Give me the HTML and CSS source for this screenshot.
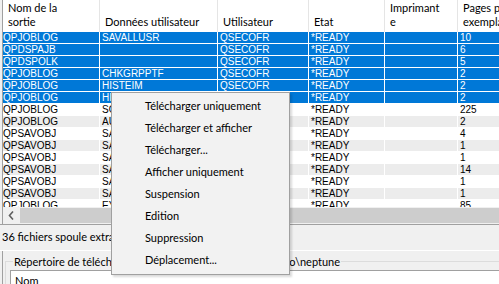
FILE: index.html
```html
<!DOCTYPE html>
<html lang="fr">
<head>
    <meta charset="UTF-8">
    <title>Fichiers spoule</title>
    <link rel="stylesheet" href="styles.css">
</head>
<body>
    <div class="grid">
        <div class="head">
            <div class="hcell c1">Nom de la<br>sortie</div>
            <div class="hcell c2">Données utilisateur</div>
            <div class="hcell c3">Utilisateur</div>
            <div class="hcell c4">Etat</div>
            <div class="hcell c5">Imprimant<br>e</div>
            <div class="hcell c6">Pages par<br>exemplaire</div>
        </div>
        <div class="row sel"><div class="cell c1">QPJOBLOG</div><div class="cell c2">SAVALLUSR</div><div class="cell c3">QSECOFR</div><div class="cell c4">*READY</div><div class="cell c5"></div><div class="cell c6">10</div></div>
        <div class="row sel"><div class="cell c1">QPDSPAJB</div><div class="cell c2"></div><div class="cell c3">QSECOFR</div><div class="cell c4">*READY</div><div class="cell c5"></div><div class="cell c6">6</div></div>
        <div class="row sel"><div class="cell c1">QPDSPOLK</div><div class="cell c2"></div><div class="cell c3">QSECOFR</div><div class="cell c4">*READY</div><div class="cell c5"></div><div class="cell c6">5</div></div>
        <div class="row sel"><div class="cell c1">QPJOBLOG</div><div class="cell c2">CHKGRPPTF</div><div class="cell c3">QSECOFR</div><div class="cell c4">*READY</div><div class="cell c5"></div><div class="cell c6">2</div></div>
        <div class="row sel"><div class="cell c1">QPJOBLOG</div><div class="cell c2">HISTEIM</div><div class="cell c3">QSECOFR</div><div class="cell c4">*READY</div><div class="cell c5"></div><div class="cell c6">2</div></div>
        <div class="row sel"><div class="cell c1">QPJOBLOG</div><div class="cell c2">HISTMNT</div><div class="cell c3">QSECOFR</div><div class="cell c4">*READY</div><div class="cell c5"></div><div class="cell c6">2</div></div>
        <div class="row"><div class="cell c1">QPJOBLOG</div><div class="cell c2">SOCKETS</div><div class="cell c3">QSECOFR</div><div class="cell c4">*READY</div><div class="cell c5"></div><div class="cell c6">225</div></div>
        <div class="row alt"><div class="cell c1">QPJOBLOG</div><div class="cell c2">AUTOSTART</div><div class="cell c3">QSECOFR</div><div class="cell c4">*READY</div><div class="cell c5"></div><div class="cell c6">2</div></div>
        <div class="row"><div class="cell c1">QPSAVOBJ</div><div class="cell c2">SAVLIB</div><div class="cell c3">QSECOFR</div><div class="cell c4">*READY</div><div class="cell c5"></div><div class="cell c6">4</div></div>
        <div class="row alt"><div class="cell c1">QPSAVOBJ</div><div class="cell c2">SAVLIB</div><div class="cell c3">QSECOFR</div><div class="cell c4">*READY</div><div class="cell c5"></div><div class="cell c6">1</div></div>
        <div class="row"><div class="cell c1">QPSAVOBJ</div><div class="cell c2">SAVLIB</div><div class="cell c3">QSECOFR</div><div class="cell c4">*READY</div><div class="cell c5"></div><div class="cell c6">1</div></div>
        <div class="row alt"><div class="cell c1">QPSAVOBJ</div><div class="cell c2">SAVLIB</div><div class="cell c3">QSECOFR</div><div class="cell c4">*READY</div><div class="cell c5"></div><div class="cell c6">14</div></div>
        <div class="row"><div class="cell c1">QPSAVOBJ</div><div class="cell c2">SAVLIB</div><div class="cell c3">QSECOFR</div><div class="cell c4">*READY</div><div class="cell c5"></div><div class="cell c6">1</div></div>
        <div class="row alt"><div class="cell c1">QPSAVOBJ</div><div class="cell c2">SAVLIB</div><div class="cell c3">QSECOFR</div><div class="cell c4">*READY</div><div class="cell c5"></div><div class="cell c6">1</div></div>
        <div class="row last"><div class="cell c1">QPJOBLOG</div><div class="cell c2">EYSAV</div><div class="cell c3">QSECOFR</div><div class="cell c4">*READY</div><div class="cell c5"></div><div class="cell c6">85</div></div>
        <div class="hscroll">
            <div class="arrow">
                <svg width="7" height="9" viewBox="0 0 7 9"><path d="M5 0.5 L1.5 4.5 L5 8.5" fill="none" stroke="#606060" stroke-width="1.6"/></svg>
            </div>
            <div class="thumb"></div>
        </div>
    </div>

    <div class="status">36 fichiers spoule extraits</div>

    <div class="panel">
        <fieldset class="dest">
            <legend>Répertoire de téléchargement : C:\Users\admin\AppDemo\neptune</legend>
            <div class="list">
                <div class="list-head">Nom</div>
            </div>
        </fieldset>
    </div>

    <div class="menu">
        <div class="item">Télécharger uniquement</div>
        <div class="item">Télécharger et afficher</div>
        <div class="item">Télécharger...</div>
        <div class="item">Afficher uniquement</div>
        <div class="item">Suspension</div>
        <div class="item">Edition</div>
        <div class="item">Suppression</div>
        <div class="item">Déplacement...</div>
    </div>
</body>
</html>
```

FILE: styles.css
```css
body {
    margin: 0;
    width: 499px;
    height: 284px;
    overflow: hidden;
    background-color: #f0f0f0;
    font-family: 'Lato', 'Noto Sans', sans-serif;
    font-size: 11px;
    position: relative;
}
.grid {
    margin-left: 2px;
    border-left: 1px solid #a0a0a0;
    background-color: white;
    width: 520px;
}
.head {
    display: flex;
    height: 32px;
    background-color: white;
}
.hcell {
    box-sizing: border-box;
    flex-shrink: 0;
    height: 32px;
    padding: 0 0 3px 5px;
    border-right: 1px solid #e5e5e5;
    line-height: 14px;
    display: flex;
    align-items: flex-end;
    color: #000;
    white-space: nowrap;
    overflow: hidden;
}
.c1 { width: 97px; }
.c2 { width: 118px; }
.c3 { width: 91px; }
.c4 { width: 76px; }
.c5 { width: 73px; }
.c6 { width: 80px; }
.row {
    display: flex;
    height: 12px;
    font-family: 'Liberation Sans', Arial, sans-serif;
    font-size: 10px;
}
.cell {
    box-sizing: border-box;
    flex-shrink: 0;
    height: 12px;
    padding-left: 2px;
    line-height: 11px;
    border-right: 1px solid white;
    border-bottom: 1px solid white;
    white-space: nowrap;
    overflow: hidden;
}
.row .c1 { padding-left: 0; }
.sel .cell {
    background-color: #0078d7;
    color: white;
}
.alt .cell {
    background-color: #ececec;
}
.last {
    height: 7px;
    overflow: hidden;
}
.hscroll {
    display: flex;
    height: 17px;
    background-color: #f0f0f0;
}
.arrow {
    width: 17px;
    display: flex;
    align-items: center;
    justify-content: center;
}
.thumb {
    flex: 1;
    margin: 1px 0;
    background-color: #cdcdcd;
}
.status {
    height: 25px;
    line-height: 24px;
    padding-left: 2px;
    border-top: 1px solid #a0a0a0;
    border-bottom: 1px solid white;
}
.panel {
    margin-left: 2px;
    border-left: 1px solid #a0a0a0;
    padding: 3px 0 0 2px;
}
.dest {
    margin: 0;
    padding: 1px 0 0 4px;
    border: 1px solid #dcdcdc;
    border-right: none;
    border-bottom: none;
    height: 40px;
}
.dest legend {
    padding: 0 1px;
    margin-left: 3px;
    line-height: 15px;
    white-space: nowrap;
}
.list {
    background-color: white;
    border: 1px solid #a0a0a0;
    border-right: none;
    height: 40px;
}
.list-head {
    padding: 3px 4px;
}
.menu {
    position: absolute;
    left: 111px;
    top: 92px;
    width: 177px;
    padding: 2px 0 3px 0;
    background-color: #f2f2f2;
    border: 1px solid #a0a0a0;
    box-shadow: 2px 2px 2px rgba(0, 0, 0, 0.15);
}
.item {
    height: 22px;
    line-height: 22px;
    padding-left: 33px;
}
```
